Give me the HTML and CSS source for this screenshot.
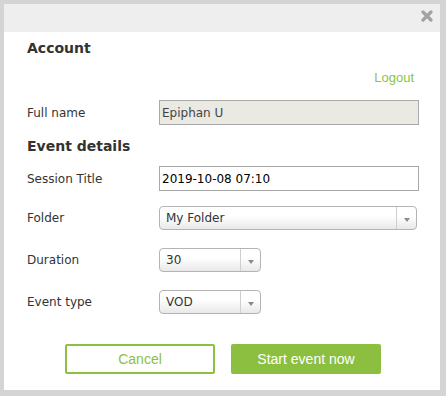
FILE: index.html
```html
<!DOCTYPE html>
<html lang="en">
<head>
    <meta charset="UTF-8">
    <title>Start event</title>
    <link rel="stylesheet" href="styles.css">
</head>
<body>
    <div class="dialog">
        <div class="dialog-header">
            <button class="close-btn" title="Close">
                <svg width="12" height="12" viewBox="0 0 12 12">
                    <path d="M2 2 L10 10 M10 2 L2 10" stroke="#a2a2a2" stroke-width="3.2" stroke-linecap="round"/>
                </svg>
            </button>
        </div>
        <div class="dialog-body">
            <h2 class="section-title">Account</h2>
            <div class="logout-row"><a href="#" class="logout">Logout</a></div>

            <div class="form-row row-name">
                <label class="field-label">Full name</label>
                <input class="text-input readonly" type="text" value="Epiphan U" readonly>
            </div>

            <h2 class="section-title event-title">Event details</h2>

            <div class="form-row row-session">
                <label class="field-label">Session Title</label>
                <input class="text-input" type="text" value="2019-10-08 07:10">
            </div>

            <div class="form-row row-folder">
                <label class="field-label">Folder</label>
                <div class="select select-wide">
                    <span class="select-text">My Folder</span>
                    <span class="select-arrow"></span>
                </div>
            </div>

            <div class="form-row row-small">
                <label class="field-label">Duration</label>
                <div class="select select-short">
                    <span class="select-text">30</span>
                    <span class="select-arrow"></span>
                </div>
            </div>

            <div class="form-row row-small">
                <label class="field-label">Event type</label>
                <div class="select select-short">
                    <span class="select-text">VOD</span>
                    <span class="select-arrow"></span>
                </div>
            </div>

            <div class="actions">
                <button class="btn btn-outline">Cancel</button>
                <button class="btn btn-primary">Start event now</button>
            </div>
        </div>
    </div>
</body>
</html>
```

FILE: styles.css
```css
body {
    margin: 0;
    background: #d4d4d4;
    font-family: "DejaVu Sans", Verdana, sans-serif;
    font-size: 12px;
    color: #333;
}

.dialog {
    width: 436px;
    height: 386px;
    margin: 4px;
    background: #fff;
    display: flex;
    flex-direction: column;
}

/* HEADER */
.dialog-header {
    height: 28px;
    background: #eeeeee;
    display: flex;
    justify-content: flex-end;
    align-items: flex-start;
    padding-right: 7px;
}

.close-btn {
    background: none;
    border: none;
    padding: 0;
    margin-top: 6px;
    width: 12px;
    height: 12px;
    cursor: pointer;
    display: block;
}

.close-btn svg {
    display: block;
}

/* BODY */
.dialog-body {
    padding: 0 21px 0 23px;
}

.section-title {
    margin: 8px 0 0;
    font-size: 14px;
    line-height: 17px;
    font-weight: bold;
    color: #333;
}

.event-title {
    margin-top: 13px;
}

.logout-row {
    display: flex;
    justify-content: flex-end;
    margin-top: 13px;
    padding-right: 5px;
    line-height: 16px;
}

.logout {
    font-family: "Liberation Sans", Arial, sans-serif;
    font-size: 13px;
    color: #8cc43f;
    text-decoration: none;
}

.form-row {
    display: flex;
    align-items: center;
}

.row-name {
    margin-top: 14px;
}

.row-session {
    margin-top: 11px;
}

.row-folder {
    margin-top: 15px;
}

.row-small {
    margin-top: 18px;
}

.field-label {
    width: 132px;
    flex-shrink: 0;
    line-height: 14px;
    color: #333;
}

.text-input {
    box-sizing: border-box;
    width: 260px;
    height: 25px;
    border: 1px solid #a9a9a9;
    padding: 0 2px;
    margin: 0;
    font-family: "DejaVu Sans", Verdana, sans-serif;
    font-size: 12px;
    color: #000;
    background: #fff;
    outline: none;
}

.text-input.readonly {
    background: #eae9e2;
    color: #444;
}

/* CUSTOM SELECT */
.select {
    box-sizing: border-box;
    height: 24px;
    border: 1px solid #b4b4b4;
    border-radius: 4px;
    background: linear-gradient(#ffffff, #ffffff 40%, #e8e8e8);
    display: flex;
    align-items: center;
}

.select-wide {
    width: 258px;
}

.select-short {
    width: 102px;
}

.select-text {
    flex: 1;
    padding-left: 6px;
    line-height: 14px;
    color: #333;
}

.select-arrow {
    width: 19px;
    align-self: stretch;
    border-left: 1px solid #cfcfcf;
    position: relative;
}

.select-arrow::after {
    content: "";
    position: absolute;
    left: 7px;
    top: 11px;
    border-left: 3px solid transparent;
    border-right: 3px solid transparent;
    border-top: 4px solid #8a8a8a;
}

/* BUTTONS */
.actions {
    display: flex;
    justify-content: center;
    gap: 16px;
    margin-top: 30px;
}

.btn {
    box-sizing: border-box;
    width: 150px;
    height: 30px;
    border-radius: 2px;
    font-family: "Liberation Sans", Arial, sans-serif;
    font-size: 14px;
    cursor: pointer;
    padding: 0;
}

.btn-outline {
    background: #fff;
    border: 2px solid #8cc043;
    color: #8cc043;
}

.btn-primary {
    background: #8cbf40;
    border: none;
    color: #fff;
}
```
